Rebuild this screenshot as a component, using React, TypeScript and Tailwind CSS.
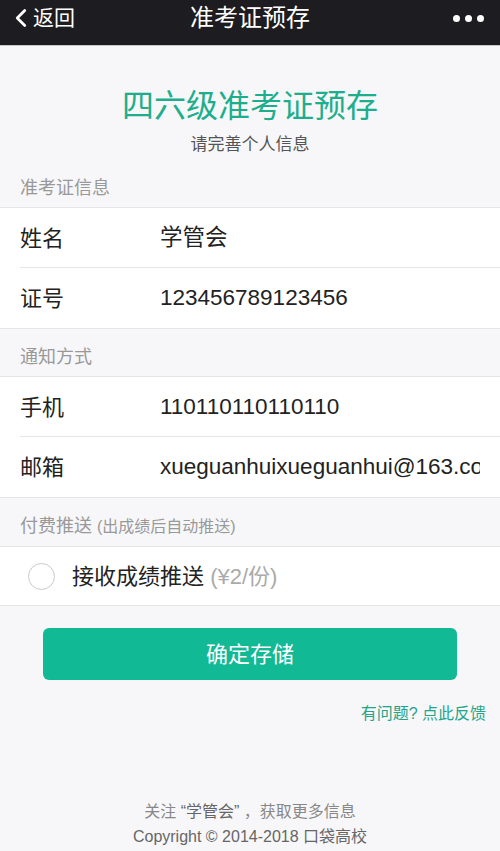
import { ChevronLeft } from 'lucide-react';

const font = { fontFamily: '"Liberation Sans", "Noto Sans CJK SC", sans-serif' };

function Row({ label, value, divider }: { label: string; value: string; divider?: boolean }) {
  return (
    <div className="relative flex h-[60px] items-center pl-5">
      <span className="w-[140px] shrink-0 text-[22px] text-[#222]">{label}</span>
      <span className="mr-5 overflow-hidden whitespace-nowrap text-[22.5px] text-[#222]">{value}</span>
      {divider && <div className="absolute bottom-0 left-5 right-0 h-px bg-[#e6e6e6]" />}
    </div>
  );
}

function Section({ children }: { children: React.ReactNode }) {
  return <div className="border-y border-[#e5e5e5] bg-white">{children}</div>;
}

export default function App() {
  return (
    <div className="flex min-h-[851px] flex-col bg-[#f7f7f9]" style={font}>
      <div className="relative flex h-[46px] items-center justify-center border-b border-[#c8c8c8] bg-[#1d1c20] pb-[9px] text-white">
        <div className="absolute left-[6px] top-[2px] flex items-center">
          <ChevronLeft size={30} strokeWidth={2.2} className="-mr-[3px]" />
          <span className="text-[21px]">返回</span>
        </div>
        <span className="text-[24px]">准考证预存</span>
        <div className="absolute right-4 top-[15px] flex gap-[5px]">
          <span className="h-[7px] w-[7px] rounded-full bg-white" />
          <span className="h-[7px] w-[7px] rounded-full bg-white" />
          <span className="h-[7px] w-[7px] rounded-full bg-white" />
        </div>
      </div>

      <div className="pt-[40px] text-center text-[32px] leading-[40px] text-[#1eae8c]">四六级准考证预存</div>
      <div className="mt-[9px] text-center text-[17px] leading-5 text-[#555]">请完善个人信息</div>

      <div className="mt-[17px] h-[35px] pl-5 text-[18px] leading-[32px] text-[#999]">准考证信息</div>
      <Section>
        <Row label="姓名" value="学管会" divider />
        <Row label="证号" value="123456789123456" />
      </Section>

      <div className="h-[47px] pl-5 text-[18px] leading-[56px] text-[#999]">通知方式</div>
      <Section>
        <Row label="手机" value="110110110110110" divider />
        <Row label="邮箱" value="xueguanhuixueguanhui@163.com" />
      </Section>

      <div className="h-[48px] pl-5 text-[18px] leading-[56px] text-[#999]">
        付费推送 <span className="text-[16px]">(出成绩后自动推送)</span>
      </div>
      <Section>
        <div className="flex h-[58px] items-center pl-[28px]">
          <span className="h-[27px] w-[27px] rounded-full border border-[#c9c9c9]" />
          <span className="ml-[17px] text-[22px] text-[#222]">
            接收成绩推送 <span className="text-[#aaa]">(¥2/份)</span>
          </span>
        </div>
      </Section>

      <div className="mx-[43px] mt-[22px] flex h-[52px] items-center justify-center rounded-[6px] bg-[#12b995] text-[22px] text-white">
        确定存储
      </div>
      <div className="mt-[22px] pr-[14px] text-right text-[16px] text-[#1fa58a]">有问题? 点此反馈</div>

      <div className="mt-auto pb-[2px] text-center text-[16px] leading-[25px] text-[#888]">
        <div>
          关注 <span className="text-[#666]">“学管会”</span> ，获取更多信息
        </div>
        <div className="text-[#666]">Copyright © 2014-2018 口袋高校</div>
      </div>
    </div>
  );
}
